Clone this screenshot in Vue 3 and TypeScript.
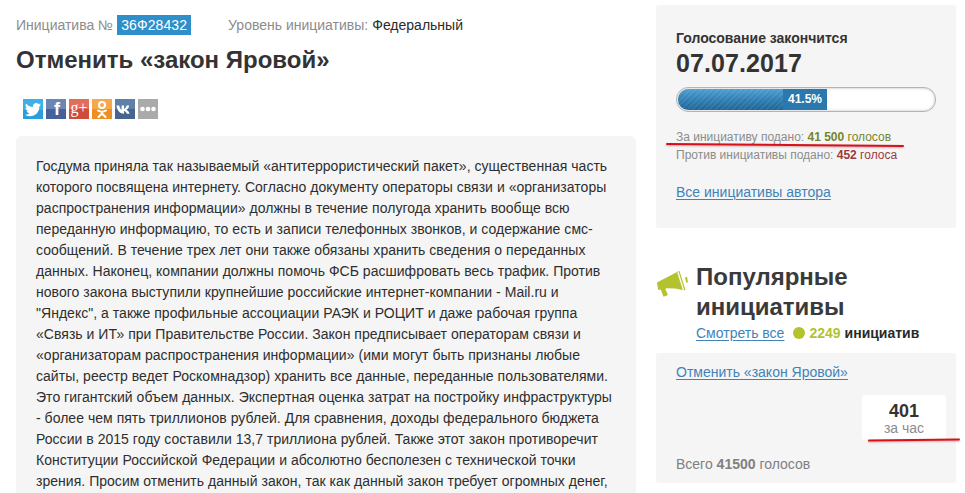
<template>
  <div class="page">
    <main class="content">
      <div class="meta">
        <span class="muted">Инициатива №</span>
        <span class="badge">36Ф28432</span>
        <span class="muted level">Уровень инициативы:</span>
        <span class="level-value">Федеральный</span>
      </div>
      <h1>Отменить «закон Яровой»</h1>
      <div class="share">
        <a class="soc tw">
          <svg viewBox="0 0 20 20"><path fill="#fff" d="M18 5.600c-.6.3-1.300.4-1.900.5.700-.4 1.200-1 1.500-1.800-.6.4-1.400.6-2.100.8a3.300 3.300 0 0 0-5.600 3C7 7.900 4.600 6.600 3 4.600c-.9 1.500-.4 3.400 1 4.400-.5 0-1-.2-1.500-.4 0 1.600 1.100 3 2.600 3.300-.5.100-1 .1-1.500.1.400 1.300 1.600 2.200 3.100 2.300A6.600 6.600 0 0 1 2 15.700a9.300 9.300 0 0 0 14.300-8.300c.7-.5 1.200-1.100 1.700-1.800z"/></svg>
        </a>
        <a class="soc fb">
          <svg viewBox="0 0 20 20"><text x="8" y="16" font-size="18" font-weight="700" fill="#fff">f</text></svg>
        </a>
        <a class="soc gp">g+</a>
        <a class="soc ok">
          <svg viewBox="0 0 20 20" fill="none" stroke="#fff" stroke-width="2" stroke-linecap="round"><circle cx="10" cy="6" r="3"/><path d="M6 11.500c2.500 1.600 5.500 1.600 8 0M10 13v1.500M10 14.500l-3.500 3.500M10 14.500l3.500 3.500"/></svg>
        </a>
        <a class="soc vk">
          <svg viewBox="0 0 20 20"><path fill="#fff" d="M1.500 6.500h2.700c.3 2 1.300 3.800 2.400 4.200V6.500h2.500v3.400c1-.2 2.100-1.600 2.600-3.400h2.500c-.4 2-1.600 3.600-2.700 4.300 1.400.7 2.500 2 3.100 3.900h-2.700c-.5-1.500-1.600-2.600-2.800-2.800v2.800H9c-4 0-6.800-2.900-7.500-8.200z"/></svg>
        </a>
        <a class="soc more">
          <svg viewBox="0 0 20 20"><circle cx="4.500" cy="10" r="2.300" fill="#fff"/><circle cx="10" cy="10" r="2.300" fill="#fff"/><circle cx="15.500" cy="10" r="2.300" fill="#fff"/></svg>
        </a>
      </div>
      <section class="text-card">
        <p v-for="line in lines" :key="line">{{ line }}</p>
      </section>
    </main>

    <aside class="sidebar">
      <section class="vote-card">
        <div class="ends">Голосование закончится</div>
        <div class="date">07.07.2017</div>
        <div class="progress">
          <div class="progress-fill"></div>
          <div class="progress-label">41.5%</div>
        </div>
        <div class="stat">За инициативу подано: <b class="olive">41 500</b> <span class="olive">голосов</span></div>
        <div class="stat">Против инициативы подано: <b class="red">452</b> <span class="red">голоса</span></div>
        <a class="link author">Все инициативы автора</a>
        <i class="mark mark-votes"></i>
      </section>

      <section class="popular">
        <svg class="horn" viewBox="0 0 32 32">
          <path fill="#b5c22f" d="M1 16.500 22 5.500l1.500-.5 6 19-1.500.3L19 22.500l-8.500-.2-1.200.6 2.700 6.100-4.500 1.700-2.800-7.200-2.500.5z"/>
          <path fill="#fff" d="M21.300 6.500l1.300-.4 5.500 17.600-1.300.3z"/>
          <path fill="#b5c22f" d="M29 11.500l2-.7 1 5.500-1.800.5z"/>
        </svg>
        <div class="popular-body">
          <h2>Популярные инициативы</h2>
          <div class="popular-row">
            <a class="link">Смотреть все</a>
            <i class="dot"></i>
            <b class="count">2249</b>
            <b class="count-label">инициатив</b>
          </div>
        </div>
      </section>

      <section class="top-card">
        <a class="link">Отменить «закон Яровой»</a>
        <div class="rate">
          <b>401</b>
          <span>за час</span>
        </div>
        <div class="total">Всего <b>41500</b> голосов</div>
        <i class="mark mark-rate"></i>
      </section>
    </aside>
  </div>
</template>

<script setup lang="ts">
const lines: string[] = [
  'Госдума приняла так называемый «антитеррористический пакет», существенная часть',
  'которого посвящена интернету. Согласно документу операторы связи и «организаторы',
  'распространения информации» должны в течение полугода хранить вообще всю',
  'переданную информацию, то есть и записи телефонных звонков, и содержание смс-',
  'сообщений. В течение трех лет они также обязаны хранить сведения о переданных',
  'данных. Наконец, компании должны помочь ФСБ расшифровать весь трафик. Против',
  'нового закона выступили крупнейшие российские интернет-компании - Mail.ru и',
  '"Яндекс", а также профильные ассоциации РАЭК и РОЦИТ и даже рабочая группа',
  '«Связь и ИТ» при Правительстве России. Закон предписывает операторам связи и',
  '«организаторам распространения информации» (ими могут быть признаны любые',
  'сайты, реестр ведет Роскомнадзор) хранить все данные, переданные пользователями.',
  'Это гигантский объем данных. Экспертная оценка затрат на постройку инфраструктуры',
  '- более чем пять триллионов рублей. Для сравнения, доходы федерального бюджета',
  'России в 2015 году составили 13,7 триллиона рублей. Также этот закон противоречит',
  'Конституции Российской Федерации и абсолютно бесполезен с технической точки',
  'зрения. Просим отменить данный закон, так как данный закон требует огромных денег,',
]
</script>

<style>
html,
body {
  margin: 0;
  background: #fff;
  overflow: hidden;
}
</style>

<style scoped>
.page {
  display: flex;
  gap: 20px;
  width: 965px;
  height: 493px;
  padding: 0 9px 0 16px;
  box-sizing: border-box;
  overflow: hidden;
  font-family: "Liberation Sans", Arial, sans-serif;
  font-size: 14px;
  color: #333;
}

.content {
  width: 620px;
  flex: none;
}

.meta {
  display: flex;
  align-items: center;
  height: 20px;
  margin-top: 15px;
  font-size: 14px;
}

.muted {
  color: #8c8c8c;
}

.badge {
  margin-left: 4px;
  padding: 0 4px;
  height: 20px;
  line-height: 20px;
  background: #2f8fcb;
  color: #fff;
  font-size: 14px;
  letter-spacing: 0.1px;
}

.level {
  margin-left: 37px;
}

.level-value {
  margin-left: 4px;
  color: #2a2a2a;
}

h1 {
  margin: 11px 0 0;
  font-size: 24px;
  line-height: 28px;
  font-weight: 700;
  color: #333;
}

.share {
  display: flex;
  gap: 3px;
  margin: 25px 0 0 7px;
  height: 20px;
}

.soc {
  display: block;
  width: 20px;
  height: 20px;
  color: #fff;
  text-align: center;
  line-height: 20px;
  overflow: hidden;
}

.soc svg {
  display: block;
  width: 20px;
  height: 20px;
}

.tw {
  background: linear-gradient(#3fb0e6 55%, #2a9ed8 55%);
}

.fb {
  background: linear-gradient(#6c86b4 50%, #45629a 50%);
}

.gp {
  background: linear-gradient(#e26d5b 50%, #cf4c3c 50%);
  font-family: "Liberation Serif", serif;
  font-size: 16px;
  line-height: 18px;
}

.ok {
  background: linear-gradient(#f6a84a 50%, #ee8f22 50%);
}

.vk {
  background: linear-gradient(#5f80a8 50%, #46668f 50%);
}

.more {
  background: #aaa;
}

.text-card {
  margin-top: 17px;
  padding: 20px 20px 0;
  height: 360px;
  background: #f5f5f5;
  border-radius: 6px;
}

.text-card p {
  margin: 0;
  line-height: 21px;
  font-size: 14px;
  letter-spacing: 0.03px;
  white-space: nowrap;
  color: #2e2e2e;
}

.sidebar {
  width: 300px;
  flex: none;
}

.vote-card {
  position: relative;
  box-sizing: border-box;
  height: 223px;
  margin-top: 5px;
  padding: 25px 20px 0;
  background: #f5f5f5;
  border-radius: 3px;
}

.ends {
  font-size: 14px;
  font-weight: 700;
  line-height: 16px;
  color: #333;
}

.date {
  margin-top: 2px;
  font-size: 25px;
  line-height: 30px;
  font-weight: 700;
  letter-spacing: 0.1px;
  color: #333;
}

.progress {
  display: flex;
  box-sizing: border-box;
  width: 260px;
  height: 25px;
  margin-top: 9px;
  margin-bottom: 16px;
  background: #fff;
  border: 1px solid #b4b4b4;
  border-radius: 12px;
  box-shadow: inset 0 0 3px #bbb;
  overflow: hidden;
  padding: 1px;
}

.progress-fill {
  width: 105px;
  border-radius: 10px 0 0 10px;
  background:
    repeating-linear-gradient(135deg, rgba(255, 255, 255, 0.07) 0 2px, transparent 2px 4px),
    linear-gradient(#4d9fd0, #2f7fb3 50%, #1f6496);
}

.progress-label {
  width: 44px;
  background: #2a78ad;
  color: #fff;
  font-size: 12px;
  font-weight: 700;
  line-height: 21px;
  text-align: center;
}

.stat {
  font-size: 12px;
  line-height: 18px;
  color: #8c8c8c;
}

.olive {
  color: #75852a;
}

.red {
  color: #9a3b3f;
}

.link {
  color: #3f83b8;
  text-decoration: underline;
  text-underline-offset: 2px;
  font-size: 14px;
}

.author {
  display: block;
  margin-top: 20px;
  line-height: 16px;
}

.mark {
  position: absolute;
  display: block;
  height: 2px;
  background: #d8101c;
  border-radius: 1px;
  box-shadow: 0 1px 2px rgba(120, 0, 0, 0.3);
}

.mark-votes {
  left: 10px;
  top: 139px;
  width: 238px;
  transform: rotate(0.45deg);
}

.mark-rate {
  left: 212px;
  top: 86px;
  width: 92px;
  transform: rotate(-0.7deg);
}

.popular {
  display: flex;
  margin-top: 34px;
  height: 91px;
}

.horn {
  flex: none;
  width: 32px;
  height: 32px;
  margin-top: 4px;
  margin-right: 8px;
}

.popular-body {
  min-width: 0;
}

h2 {
  margin: 0;
  width: 220px;
  font-size: 24px;
  line-height: 30px;
  font-weight: 700;
  color: #3a3a3a;
}

.popular-row {
  display: flex;
  align-items: center;
  height: 20px;
  margin-top: 1px;
}

.dot {
  width: 12px;
  height: 12px;
  margin-left: 9px;
  border-radius: 50%;
  background: #b5c22f;
}

.count {
  margin-left: 4px;
  color: #b5c22f;
}

.count-label {
  margin-left: 4px;
  color: #2a2a2a;
}

.top-card {
  position: relative;
  box-sizing: border-box;
  height: 130px;
  padding: 11px 20px 0;
  background: #f5f5f5;
  border-radius: 3px;
}

.top-card .link {
  display: block;
  line-height: 16px;
}

.rate {
  display: flex;
  flex-direction: column;
  align-items: center;
  box-sizing: border-box;
  width: 84px;
  height: 45px;
  margin: 15px 0 0 186px;
  padding-top: 6px;
  background: #fff;
  border-radius: 3px;
}

.rate b {
  font-size: 18px;
  line-height: 20px;
  color: #333;
}

.rate span {
  font-size: 14px;
  line-height: 14px;
  color: #8c8c8c;
}

.total {
  margin-top: 16px;
  font-size: 14px;
  line-height: 16px;
  color: #808080;
}
</style>
